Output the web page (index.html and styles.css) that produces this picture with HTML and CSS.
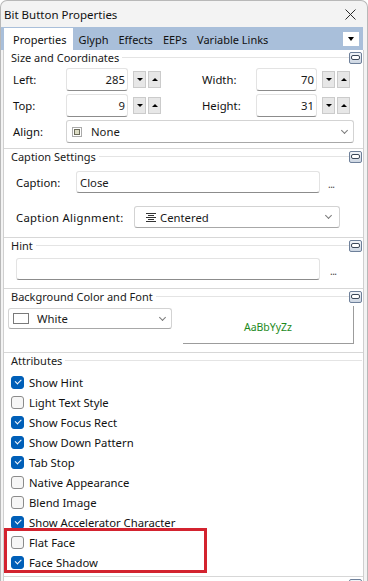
FILE: index.html
```html
<!DOCTYPE html>
<html lang="en">
<head>
    <meta charset="UTF-8">
    <title>Bit Button Properties</title>
    <link rel="stylesheet" href="styles.css">
</head>
<body>
<div class="window">
    <div class="titlebar">
        <span class="title">Bit Button Properties</span>
        <svg class="close" width="11" height="11" viewBox="0 0 11 11">
            <path d="M0.5 0.5 L10.5 10.5 M10.5 0.5 L0.5 10.5" stroke="#2b2b2b" stroke-width="1" fill="none"/>
        </svg>
    </div>

    <div class="tabbar">
        <span class="tab active">Properties</span>
        <span class="tab">Glyph</span>
        <span class="tab">Effects</span>
        <span class="tab">EEPs</span>
        <span class="tab">Variable Links</span>
        <span class="tab-menu"></span>
    </div>

    <div class="content">
        <!-- size and coordinates -->
        <div class="panel first">
            <div class="panel-head">
                <span class="panel-title">Size and Coordinates</span>
                <span class="panel-rule"></span>
                <span class="collapse"></span>
            </div>
            <div class="coord-row">
                <span class="lbl lbl-left">Left:</span>
                <span class="field num num-left">285</span>
                <span class="spin down"></span>
                <span class="spin up"></span>
                <span class="lbl lbl-right">Width:</span>
                <span class="field num num-right">70</span>
                <span class="spin down"></span>
                <span class="spin up"></span>
            </div>
            <div class="coord-row">
                <span class="lbl lbl-left">Top:</span>
                <span class="field num num-left">9</span>
                <span class="spin down"></span>
                <span class="spin up"></span>
                <span class="lbl lbl-right">Height:</span>
                <span class="field num num-right">31</span>
                <span class="spin down"></span>
                <span class="spin up"></span>
            </div>
            <div class="coord-row">
                <span class="lbl lbl-left">Align:</span>
                <span class="combo combo-align">
                    <svg class="combo-icon" width="10" height="10" viewBox="0 0 10 10">
                        <rect x="0.5" y="0.5" width="9" height="9" fill="none" stroke="#555" stroke-dasharray="1 1"/>
                        <rect x="2.5" y="2.5" width="5" height="5" fill="#dcdcc4" stroke="#6b6b5a"/>
                    </svg>
                    <span>None</span>
                    <span class="chevron"></span>
                </span>
            </div>
        </div>

        <!-- caption settings -->
        <div class="panel caption-panel">
            <div class="panel-head">
                <span class="panel-title">Caption Settings</span>
                <span class="panel-rule"></span>
                <span class="collapse"></span>
            </div>
            <div class="caption-row">
                <span class="lbl lbl-caption">Caption:</span>
                <span class="field text-field caption-field">Close</span>
                <span class="dots">...</span>
            </div>
            <div class="caption-row second">
                <span class="lbl lbl-calign">Caption Alignment:</span>
                <span class="combo combo-calign">
                    <svg class="combo-icon" width="10" height="9" viewBox="0 0 10 9">
                        <path d="M0 0.5 H10 M2 2.5 H8 M0 4.5 H10 M2 6.5 H8 M0 8.5 H10" stroke="#333" stroke-width="1"/>
                    </svg>
                    <span>Centered</span>
                    <span class="chevron"></span>
                </span>
            </div>
        </div>

        <!-- hint -->
        <div class="panel hint-panel">
            <div class="panel-head">
                <span class="panel-title">Hint</span>
                <span class="panel-rule"></span>
                <span class="collapse"></span>
            </div>
            <div class="hint-row">
                <span class="field text-field hint-field"></span>
                <span class="dots">...</span>
            </div>
        </div>

        <!-- background color and font -->
        <div class="panel color-panel">
            <div class="panel-head">
                <span class="panel-title">Background Color and Font</span>
                <span class="panel-rule"></span>
                <span class="collapse"></span>
            </div>
            <div class="color-row">
                <span class="combo combo-color">
                    <span class="swatch"></span>
                    <span>White</span>
                    <span class="chevron"></span>
                </span>
                <div class="font-preview">AaBbYyZz</div>
            </div>
        </div>

        <!-- attributes -->
        <div class="panel attr-panel">
            <div class="panel-head">
                <span class="panel-title">Attributes</span>
                <span class="panel-rule"></span>
            </div>
            <div class="checks">
                <div class="check-row"><span class="box on"></span>Show Hint</div>
                <div class="check-row"><span class="box"></span>Light Text Style</div>
                <div class="check-row"><span class="box on"></span>Show Focus Rect</div>
                <div class="check-row"><span class="box on"></span>Show Down Pattern</div>
                <div class="check-row"><span class="box on"></span>Tab Stop</div>
                <div class="check-row"><span class="box"></span>Native Appearance</div>
                <div class="check-row"><span class="box"></span>Blend Image</div>
                <div class="check-row"><span class="box on"></span>Show Accelerator Character</div>
                <div class="check-row"><span class="box"></span>Flat Face</div>
                <div class="check-row"><span class="box on"></span>Face Shadow</div>
            </div>
            <div class="highlight"></div>
        </div>

        <div class="panel">
            <div class="panel-head">
                <span class="panel-title"></span>
                <span class="panel-rule blank"></span>
                <span class="collapse"></span>
            </div>
        </div>
    </div>
</div>
</body>
</html>
```

FILE: styles.css
```css
body {
    margin: 0;
    font-family: 'Segoe UI', 'Noto Sans', sans-serif;
    font-size: 11px;
    color: #1a1a1a;
    background-color: #fff;
}

.window {
    width: 368px;
    height: 581px;
    box-sizing: border-box;
    border: 1px solid #b8b8b8;
    border-bottom: none;
    border-radius: 7px 7px 0 0;
    background-color: #f3f3f3;
    overflow: hidden;
    display: flex;
    flex-direction: column;
}

.titlebar {
    height: 26px;
    flex-shrink: 0;
    display: flex;
    align-items: center;
    justify-content: space-between;
    padding: 0 11px 0 3px;
}

.title {
    font-size: 11.5px;
    color: #111;
}

.tabbar {
    height: 23px;
    flex-shrink: 0;
    margin-right: 4px;
    padding-left: 3px;
    background-color: #a9bfda;
    display: flex;
    align-items: flex-end;
}

.tab {
    height: 22px;
    line-height: 23px;
    padding: 0 5px;
    color: #111;
}

.tab.active {
    background-color: #fff;
    padding: 0 7px 0 9px;
}

.tab-menu {
    margin-left: auto;
    margin-right: 4px;
    align-self: center;
    width: 16px;
    height: 14px;
    background-color: #fff;
    display: flex;
    align-items: center;
    justify-content: center;
}

.tab-menu::after {
    content: "";
    border-top: 4px solid #000;
    border-left: 3.5px solid transparent;
    border-right: 3.5px solid transparent;
}

.content {
    flex: 1;
    margin: 0 3px 0 2px;
    background-color: #fff;
    border-left: 1px solid #cfcfcf;
    border-right: 1px solid #cfcfcf;
    overflow: hidden;
}

/* collapsible groups */
.panel {
    border-top: 1px solid #d7d7d7;
    position: relative;
}

.panel.first {
    border-top: none;
    padding-bottom: 5px;
}

.panel-head {
    height: 15px;
    display: flex;
    align-items: center;
    padding: 0 1px 0 7px;
}

.panel-title {
    color: #1a1a1a;
}

.panel-rule {
    flex: 1;
    height: 1px;
    margin-left: 3px;
    background-color: #e4e4e4;
}

.panel-rule.blank {
    background-color: transparent;
}

.collapse {
    width: 13px;
    height: 12px;
    box-sizing: border-box;
    border: 1px solid #6e809a;
    border-radius: 2px;
    background: linear-gradient(#f1f4f8, #cdd6e2);
    display: flex;
    align-items: center;
    justify-content: center;
}

.collapse::after {
    content: "";
    width: 7px;
    height: 3px;
    border: 1px solid #3c4859;
    border-radius: 2px;
    background-color: #fff;
}

.lbl {
    flex-shrink: 0;
    color: #111;
    font-size: 11.3px;
}

/* inputs */
.field {
    box-sizing: border-box;
    background-color: #fff;
    border: 1px solid #e3e3e3;
    border-bottom-color: #8c8c8c;
    border-radius: 3px;
    display: flex;
    align-items: center;
    padding: 0 3px;
    font-size: 11.3px;
}

.num {
    height: 23px;
    justify-content: flex-end;
    padding-right: 2px;
}

.text-field {
    height: 22px;
}

.combo {
    box-sizing: border-box;
    border: 1px solid #d3d3d3;
    border-bottom-color: #a8a8a8;
    border-radius: 3px;
    background-color: #fff;
    display: flex;
    align-items: center;
    font-size: 11.3px;
}

.combo-icon {
    flex-shrink: 0;
}

.chevron {
    margin-left: auto;
    width: 4px;
    height: 4px;
    border-right: 1px solid #7a7a7a;
    border-bottom: 1px solid #7a7a7a;
    transform: rotate(45deg);
    margin-top: -3px;
    margin-right: 1px;
}

.dots {
    color: #444;
    font-size: 10px;
    letter-spacing: -0.5px;
    margin-top: 4px;
}

/* size and coordinates */
.coord-row {
    height: 23px;
    display: flex;
    align-items: center;
    padding-left: 9px;
    margin-top: 3px;
}

.lbl-left {
    width: 53px;
}

.lbl-right {
    width: 54px;
    margin-left: 41px;
}

.num-left {
    width: 62px;
}

.num-right {
    width: 61px;
}

.spin {
    width: 13px;
    height: 17px;
    box-sizing: border-box;
    background-color: #e7e7e7;
    border: 1px solid #cbcbcb;
    display: flex;
    align-items: center;
    justify-content: center;
}

.spin.down {
    margin-left: 5px;
}

.spin.up {
    margin-left: 2px;
}

.spin.down::after {
    content: "";
    border-top: 3px solid #000;
    border-left: 3px solid transparent;
    border-right: 3px solid transparent;
}

.spin.up::after {
    content: "";
    border-bottom: 3px solid #000;
    border-left: 3px solid transparent;
    border-right: 3px solid transparent;
}

.combo-align {
    width: 288px;
    height: 23px;
    padding: 0 5px 0 5px;
}

.combo-align .combo-icon {
    margin-right: 9px;
}

/* caption */
.caption-panel {
    padding-bottom: 9px;
}

.caption-row {
    display: flex;
    align-items: center;
    padding-left: 12px;
    margin-top: 7px;
}

.caption-row.second {
    margin-top: 13px;
}

.lbl-caption {
    width: 60px;
}

.caption-field {
    width: 244px;
}

.caption-row .dots {
    margin-left: 8px;
}

.lbl-calign {
    width: 118px;
    letter-spacing: 0.3px;
}

.combo-calign {
    width: 206px;
    height: 22px;
    padding: 0 7px 0 11px;
}

.combo-calign .combo-icon {
    margin-right: 4px;
}

/* hint */
.hint-panel {
    padding-bottom: 8px;
}

.hint-row {
    display: flex;
    align-items: center;
    padding-left: 12px;
    margin-top: 5px;
}

.hint-field {
    width: 304px;
}

.hint-row .dots {
    margin-left: 10px;
}

/* background colour and font */
.color-panel {
    padding-bottom: 8px;
}

.color-row {
    display: flex;
    align-items: flex-start;
    padding-left: 4px;
    margin-top: 2px;
}

.combo-color {
    width: 164px;
    height: 21px;
    margin-top: 2px;
    padding: 0 5px 0 4px;
}

.swatch {
    width: 16px;
    height: 11px;
    box-sizing: border-box;
    border: 1px solid #7a7a7a;
    background-color: #fff;
    margin-right: 8px;
}

.font-preview {
    width: 171px;
    height: 38px;
    margin-left: 11px;
    box-sizing: border-box;
    border-right: 1px solid #9c9c9c;
    border-bottom: 1px solid #9c9c9c;
    display: flex;
    align-items: center;
    justify-content: center;
    color: #1c8a1c;
    font-size: 10.5px;
    padding-top: 4px;
}

/* attributes */
.attr-panel {
    padding-bottom: 4px;
}

.checks {
    margin-top: 4px;
}

.check-row {
    height: 20px;
    display: flex;
    align-items: center;
    padding-left: 7px;
    color: #111;
    font-size: 11.3px;
}

.box {
    width: 13px;
    height: 13px;
    box-sizing: border-box;
    border: 1px solid #8b8b8b;
    border-radius: 3px;
    background-color: #f6f6f6;
    margin-right: 5px;
    display: flex;
    align-items: center;
    justify-content: center;
}

.box.on {
    background-color: #005fb8;
    border-color: #005fb8;
}

.box.on::after {
    content: "";
    width: 5px;
    height: 2.5px;
    border-left: 1.2px solid #fff;
    border-bottom: 1.2px solid #fff;
    transform: rotate(-45deg);
    margin-top: -2px;
}

.highlight {
    position: absolute;
    left: 0;
    top: 175px;
    width: 203px;
    height: 45px;
    box-sizing: border-box;
    border: 3px solid #d3232f;
}
```
